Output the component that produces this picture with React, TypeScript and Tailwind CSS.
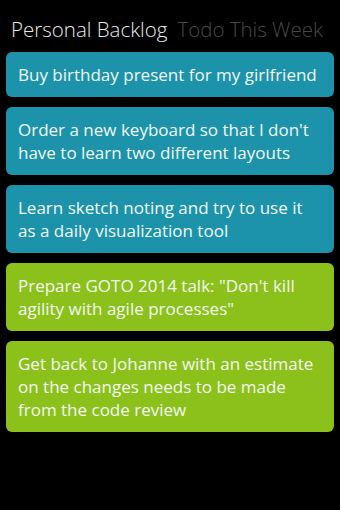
const tasks = [
  { text: "Buy birthday present for my girlfriend", color: "bg-[#1c93aa]" },
  { text: "Order a new keyboard so that I don't have to learn two different layouts", color: "bg-[#1c93aa]" },
  { text: "Learn sketch noting and try to use it as a daily visualization tool", color: "bg-[#1c93aa]" },
  { text: 'Prepare GOTO 2014 talk: "Don\'t kill agility with agile processes"', color: "bg-[#8cc11b]" },
  { text: "Get back to Johanne with an estimate on the changes needs to be made from the code review", color: "bg-[#8cc11b]" },
];

export default function App() {
  return (
    <div className="h-[510px] w-[340px] overflow-hidden bg-black font-['Open_Sans',sans-serif]">
      <div className="flex gap-[10px] whitespace-nowrap pl-[11px] pt-[15px] text-[20.5px] font-light leading-[28px]">
        <span className="text-[#e8e8e8]">Personal Backlog</span>
        <span className="text-[#484848]">Todo This Week</span>
      </div>
      <div className="mt-[9px] flex flex-col gap-[10px] px-[6px]">
        {tasks.map((t) => (
          <div key={t.text} className={`rounded-[6px] py-[11px] pl-3 pr-4 text-[17px] leading-[23px] text-[#f2f7f2] ${t.color}`}>
            {t.text}
          </div>
        ))}
      </div>
    </div>
  );
}
